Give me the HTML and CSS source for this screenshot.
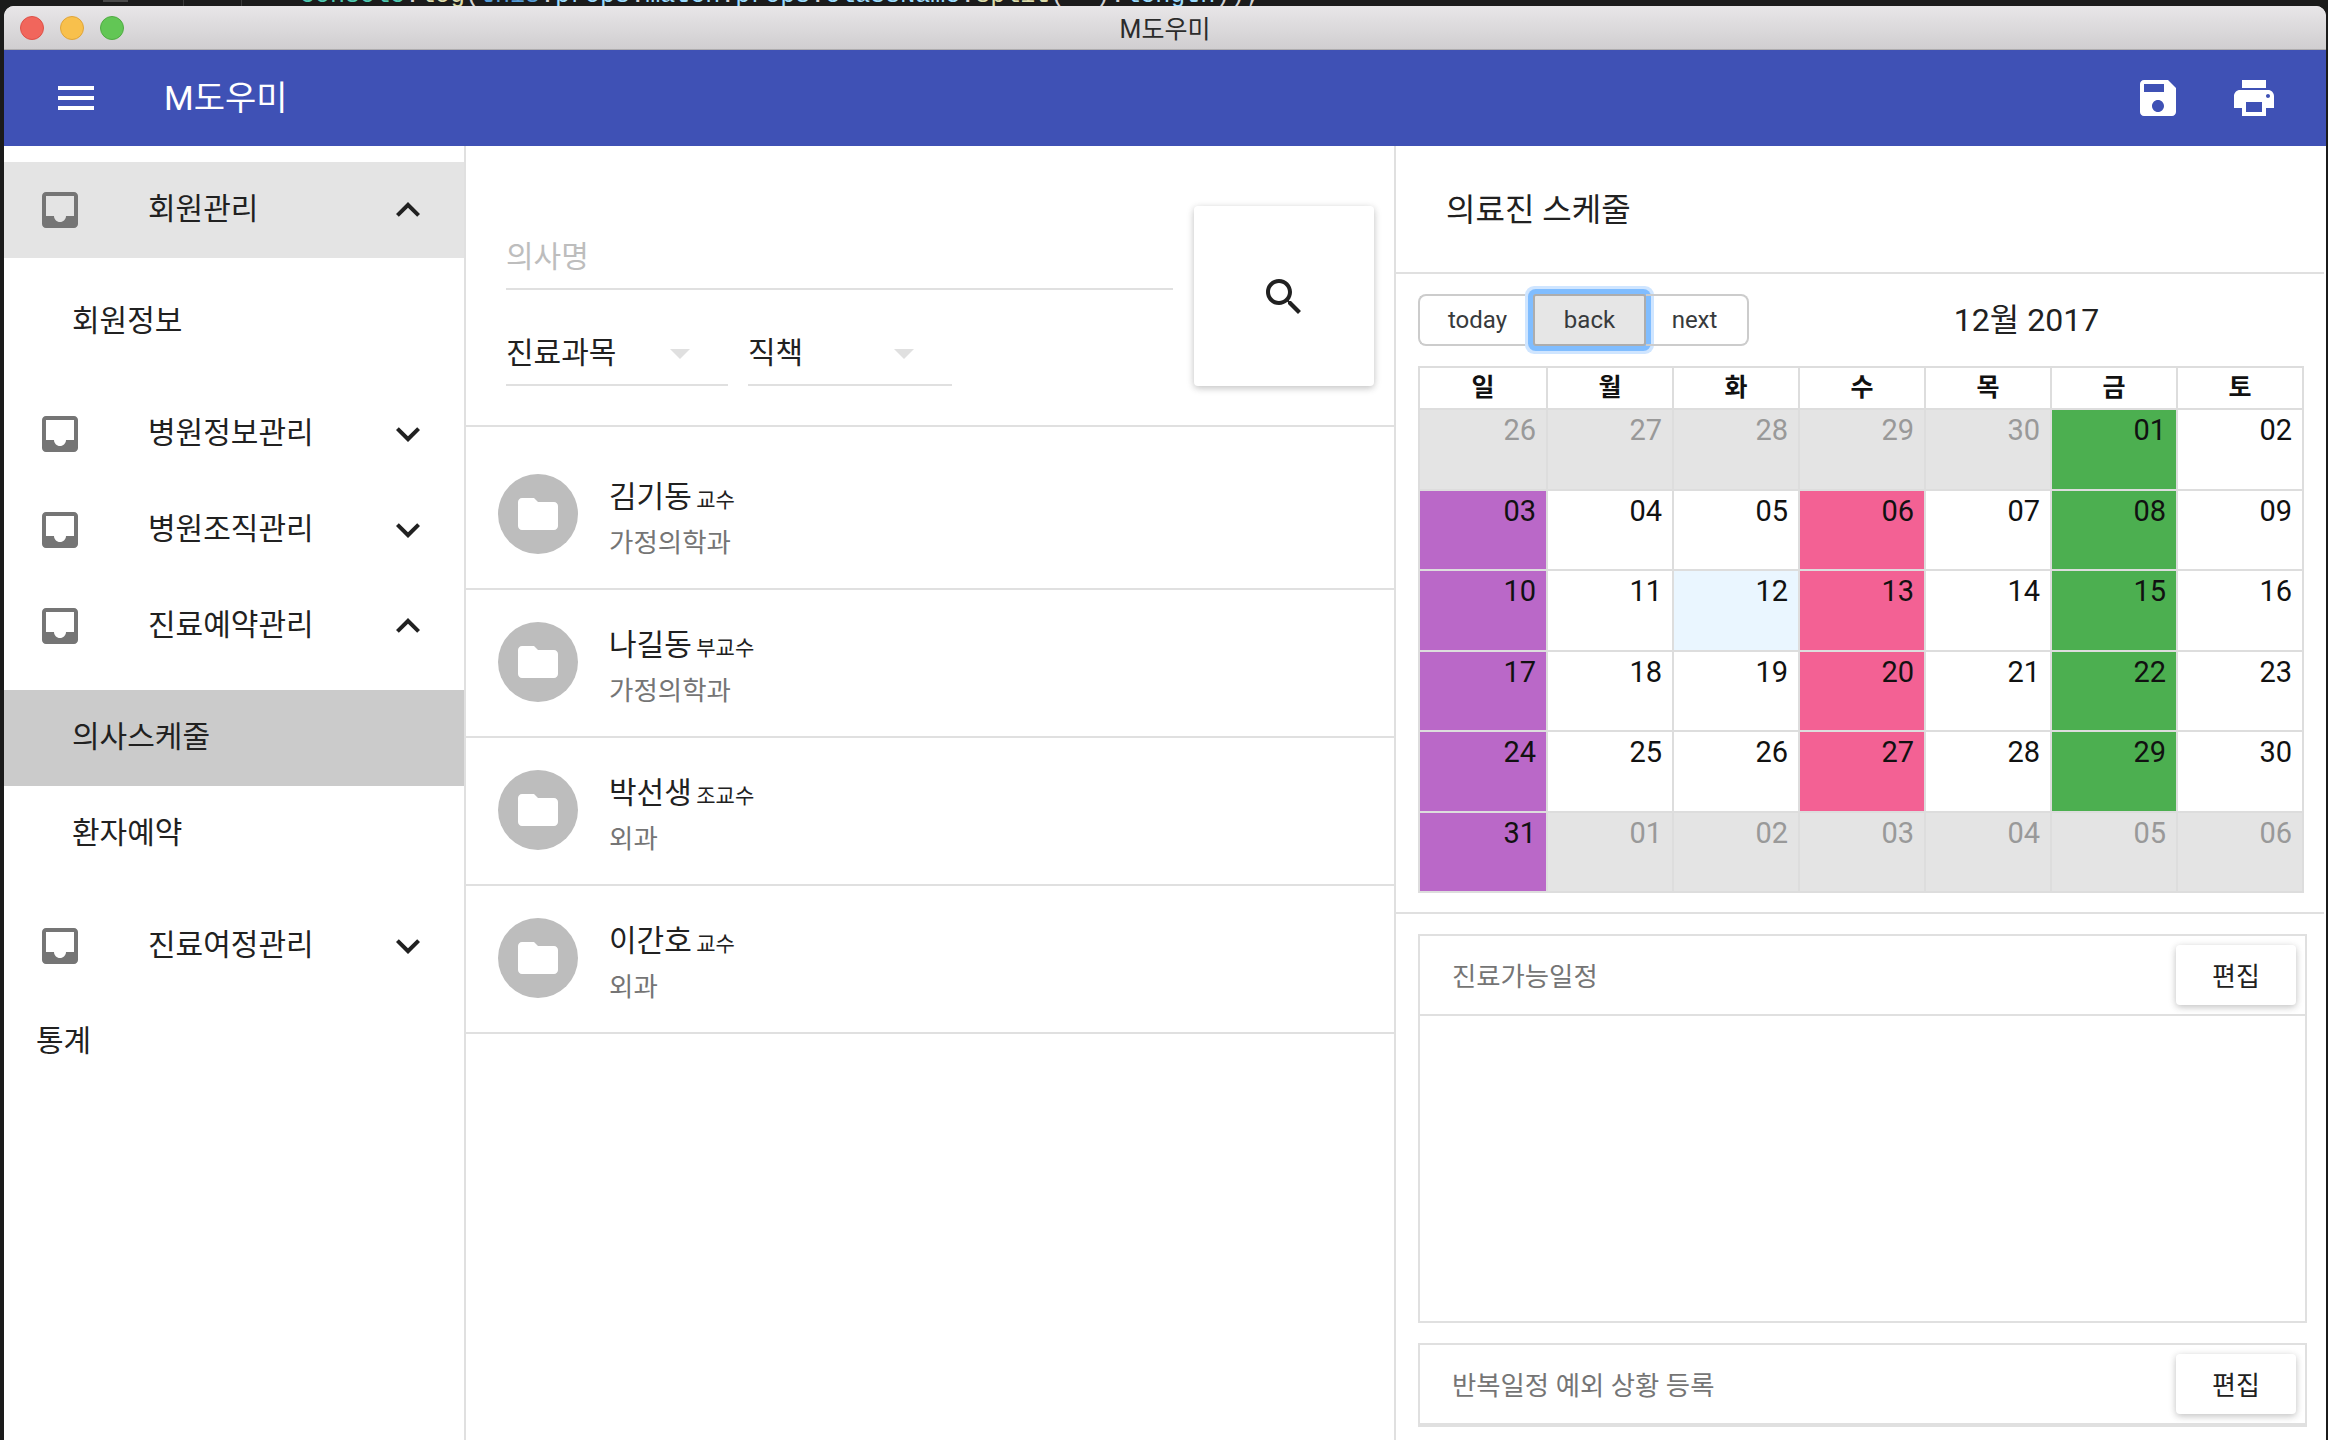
FILE: index.html
```html
<!DOCTYPE html>
<html lang="ko">
<head>
    <meta charset="UTF-8">
    <meta name="viewport" content="width=device-width, initial-scale=1.0">
    <title>M도우미</title>
    <link rel="stylesheet" href="styles.css">
</head>
<body>
    <!-- editor behind the window, only its last line shows -->
    <div class="backdrop">
        <span class="code"><span class="c-teal">console</span><span class="c-white">.</span><span class="c-yellow">log</span><span class="c-white">(</span><span class="c-blue">this</span><span class="c-white">.</span><span class="c-sky">props</span><span class="c-white">.</span><span class="c-sky">match</span><span class="c-white">.</span><span class="c-sky">props</span><span class="c-white">.</span><span class="c-sky">className</span><span class="c-white">.</span><span class="c-yellow">split</span><span class="c-white">('').</span><span class="c-sky">length</span><span class="c-white">));</span></span>
    </div>

    <div class="window">
        <div class="titlebar">
            <div class="lights">
                <span class="light light-red"></span>
                <span class="light light-yellow"></span>
                <span class="light light-green"></span>
            </div>
            <div class="titlebar-text">M도우미</div>
        </div>

        <header class="appbar">
            <svg class="icon appbar-menu" viewBox="0 0 24 24"><path d="M3 18h18v-2H3v2zm0-5h18v-2H3v2zm0-7v2h18V6H3z"/></svg>
            <div class="appbar-title">M도우미</div>
            <svg class="icon appbar-save" viewBox="0 0 24 24"><path d="M17 3H5c-1.11 0-2 .9-2 2v14c0 1.1.89 2 2 2h14c1.1 0 2-.9 2-2V7l-4-4zm-5 16c-1.66 0-3-1.34-3-3s1.34-3 3-3 3 1.34 3 3-1.34 3-3 3zm3-10H5V5h10v4z"/></svg>
            <svg class="icon appbar-print" viewBox="0 0 24 24"><path d="M19 8H5c-1.66 0-3 1.34-3 3v6h4v4h12v-4h4v-6c0-1.66-1.34-3-3-3zm-3 11H8v-5h8v5zm3-7c-.55 0-1-.45-1-1s.45-1 1-1 1 .45 1 1-.45 1-1 1zm-1-9H6v4h12V3z"/></svg>
        </header>

        <div class="columns">
            <nav class="sidebar">
                <div class="nav-item nav-open">
                    <svg class="icon nav-icon" viewBox="0 0 24 24"><path d="M19 3H4.99c-1.11 0-1.98.89-1.98 2L3 19c0 1.1.88 2 1.99 2H19c1.1 0 2-.9 2-2V5c0-1.11-.9-2-2-2zm0 12h-4c0 1.66-1.35 3-3 3s-3-1.34-3-3H4.99V5H19v10z"/></svg>
                    <span class="nav-label">회원관리</span>
                    <svg class="icon nav-arrow" viewBox="0 0 24 24"><path d="M12 8l-6 6 1.41 1.41L12 10.83l4.59 4.58L18 14z"/></svg>
                </div>
                <div class="nav-children">
                    <div class="nav-child">회원정보</div>
                </div>
                <div class="nav-item">
                    <svg class="icon nav-icon" viewBox="0 0 24 24"><path d="M19 3H4.99c-1.11 0-1.98.89-1.98 2L3 19c0 1.1.88 2 1.99 2H19c1.1 0 2-.9 2-2V5c0-1.11-.9-2-2-2zm0 12h-4c0 1.66-1.35 3-3 3s-3-1.34-3-3H4.99V5H19v10z"/></svg>
                    <span class="nav-label">병원정보관리</span>
                    <svg class="icon nav-arrow" viewBox="0 0 24 24"><path d="M16.59 8.59L12 13.17 7.41 8.59 6 10l6 6 6-6z"/></svg>
                </div>
                <div class="nav-item">
                    <svg class="icon nav-icon" viewBox="0 0 24 24"><path d="M19 3H4.99c-1.11 0-1.98.89-1.98 2L3 19c0 1.1.88 2 1.99 2H19c1.1 0 2-.9 2-2V5c0-1.11-.9-2-2-2zm0 12h-4c0 1.66-1.35 3-3 3s-3-1.34-3-3H4.99V5H19v10z"/></svg>
                    <span class="nav-label">병원조직관리</span>
                    <svg class="icon nav-arrow" viewBox="0 0 24 24"><path d="M16.59 8.59L12 13.17 7.41 8.59 6 10l6 6 6-6z"/></svg>
                </div>
                <div class="nav-item">
                    <svg class="icon nav-icon" viewBox="0 0 24 24"><path d="M19 3H4.99c-1.11 0-1.98.89-1.98 2L3 19c0 1.1.88 2 1.99 2H19c1.1 0 2-.9 2-2V5c0-1.11-.9-2-2-2zm0 12h-4c0 1.66-1.35 3-3 3s-3-1.34-3-3H4.99V5H19v10z"/></svg>
                    <span class="nav-label">진료예약관리</span>
                    <svg class="icon nav-arrow" viewBox="0 0 24 24"><path d="M12 8l-6 6 1.41 1.41L12 10.83l4.59 4.58L18 14z"/></svg>
                </div>
                <div class="nav-children">
                    <div class="nav-child nav-selected">의사스케줄</div>
                    <div class="nav-child">환자예약</div>
                </div>
                <div class="nav-item">
                    <svg class="icon nav-icon" viewBox="0 0 24 24"><path d="M19 3H4.99c-1.11 0-1.98.89-1.98 2L3 19c0 1.1.88 2 1.99 2H19c1.1 0 2-.9 2-2V5c0-1.11-.9-2-2-2zm0 12h-4c0 1.66-1.35 3-3 3s-3-1.34-3-3H4.99V5H19v10z"/></svg>
                    <span class="nav-label">진료여정관리</span>
                    <svg class="icon nav-arrow" viewBox="0 0 24 24"><path d="M16.59 8.59L12 13.17 7.41 8.59 6 10l6 6 6-6z"/></svg>
                </div>
                <div class="nav-plain">통계</div>
            </nav>

            <section class="doctors">
                <div class="filters">
                    <div class="filter-fields">
                        <input class="name-input" type="text" placeholder="의사명">
                        <div class="filter-selects">
                            <div class="select select-dept"><span>진료과목</span><i class="caret"></i></div>
                            <div class="select select-role"><span>직책</span><i class="caret"></i></div>
                        </div>
                    </div>
                    <div class="search-btn">
                        <svg class="icon" viewBox="0 0 24 24"><path d="M15.5 14h-.79l-.28-.27C15.41 12.59 16 11.11 16 9.5 16 5.91 13.09 3 9.5 3S3 5.91 3 9.5 5.91 16 9.5 16c1.61 0 3.09-.59 4.23-1.57l.27.28v.79l5 4.99L20.49 19l-4.99-5zm-6 0C7.01 14 5 11.99 5 9.5S7.01 5 9.5 5 14 7.01 14 9.5 11.99 14 9.5 14z"/></svg>
                    </div>
                </div>
                <div class="doctor-list">
                    <div class="doctor">
                        <div class="avatar"><svg class="icon" viewBox="0 0 24 24"><path d="M10 4H4c-1.1 0-1.99.9-1.99 2L2 18c0 1.1.9 2 2 2h16c1.1 0 2-.9 2-2V8c0-1.1-.9-2-2-2h-8l-2-2z"/></svg></div>
                        <div class="doctor-text">
                            <div class="doctor-name">김기동 <small>교수</small></div>
                            <div class="doctor-dept">가정의학과</div>
                        </div>
                    </div>
                    <div class="doctor">
                        <div class="avatar"><svg class="icon" viewBox="0 0 24 24"><path d="M10 4H4c-1.1 0-1.99.9-1.99 2L2 18c0 1.1.9 2 2 2h16c1.1 0 2-.9 2-2V8c0-1.1-.9-2-2-2h-8l-2-2z"/></svg></div>
                        <div class="doctor-text">
                            <div class="doctor-name">나길동 <small>부교수</small></div>
                            <div class="doctor-dept">가정의학과</div>
                        </div>
                    </div>
                    <div class="doctor">
                        <div class="avatar"><svg class="icon" viewBox="0 0 24 24"><path d="M10 4H4c-1.1 0-1.99.9-1.99 2L2 18c0 1.1.9 2 2 2h16c1.1 0 2-.9 2-2V8c0-1.1-.9-2-2-2h-8l-2-2z"/></svg></div>
                        <div class="doctor-text">
                            <div class="doctor-name">박선생 <small>조교수</small></div>
                            <div class="doctor-dept">외과</div>
                        </div>
                    </div>
                    <div class="doctor">
                        <div class="avatar"><svg class="icon" viewBox="0 0 24 24"><path d="M10 4H4c-1.1 0-1.99.9-1.99 2L2 18c0 1.1.9 2 2 2h16c1.1 0 2-.9 2-2V8c0-1.1-.9-2-2-2h-8l-2-2z"/></svg></div>
                        <div class="doctor-text">
                            <div class="doctor-name">이간호 <small>교수</small></div>
                            <div class="doctor-dept">외과</div>
                        </div>
                    </div>
                </div>
            </section>

            <section class="schedule">
                <h2 class="schedule-title">의료진 스케줄</h2>
                <div class="calendar-wrap">
                    <div class="toolbar">
                        <div class="btn-group">
                            <span class="tool-btn">today</span>
                            <span class="tool-btn tool-active">back</span>
                            <span class="tool-btn">next</span>
                        </div>
                        <div class="toolbar-label">12월 2017</div>
                    </div>
                    <div class="calendar">
                        <div class="cal-row cal-head">
                            <div class="cal-cell">일</div><div class="cal-cell">월</div><div class="cal-cell">화</div><div class="cal-cell">수</div><div class="cal-cell">목</div><div class="cal-cell">금</div><div class="cal-cell">토</div>
                        </div>
                        <div class="cal-row">
                            <div class="cal-cell off">26</div><div class="cal-cell off">27</div><div class="cal-cell off">28</div><div class="cal-cell off">29</div><div class="cal-cell off">30</div><div class="cal-cell green">01</div><div class="cal-cell">02</div>
                        </div>
                        <div class="cal-row">
                            <div class="cal-cell purple">03</div><div class="cal-cell">04</div><div class="cal-cell">05</div><div class="cal-cell pink">06</div><div class="cal-cell">07</div><div class="cal-cell green">08</div><div class="cal-cell">09</div>
                        </div>
                        <div class="cal-row">
                            <div class="cal-cell purple">10</div><div class="cal-cell">11</div><div class="cal-cell today">12</div><div class="cal-cell pink">13</div><div class="cal-cell">14</div><div class="cal-cell green">15</div><div class="cal-cell">16</div>
                        </div>
                        <div class="cal-row">
                            <div class="cal-cell purple">17</div><div class="cal-cell">18</div><div class="cal-cell">19</div><div class="cal-cell pink">20</div><div class="cal-cell">21</div><div class="cal-cell green">22</div><div class="cal-cell">23</div>
                        </div>
                        <div class="cal-row">
                            <div class="cal-cell purple">24</div><div class="cal-cell">25</div><div class="cal-cell">26</div><div class="cal-cell pink">27</div><div class="cal-cell">28</div><div class="cal-cell green">29</div><div class="cal-cell">30</div>
                        </div>
                        <div class="cal-row">
                            <div class="cal-cell purple">31</div><div class="cal-cell off">01</div><div class="cal-cell off">02</div><div class="cal-cell off">03</div><div class="cal-cell off">04</div><div class="cal-cell off">05</div><div class="cal-cell off">06</div>
                        </div>
                    </div>
                </div>
                <div class="panel panel-hours">
                    <div class="panel-head">
                        <span class="panel-title">진료가능일정</span>
                        <span class="edit-btn">편집</span>
                    </div>
                </div>
                <div class="panel">
                    <div class="panel-head">
                        <span class="panel-title">반복일정 예외 상황 등록</span>
                        <span class="edit-btn">편집</span>
                    </div>
                </div>
            </section>
        </div>
    </div>
</body>
</html>
```

FILE: styles.css
```css
html, body {
    margin: 0;
    padding: 0;
    height: 1440px;
    overflow: hidden;
}
body {
    font-family: Roboto, "Noto Sans CJK KR", sans-serif;
    background-color: #1b1b1b;
    color: #212121;
}
.icon {
    display: block;
    width: 48px;
    height: 48px;
    fill: currentColor;
    flex: none;
}

/* editor strip above the window */
.backdrop {
    height: 6px;
    overflow: hidden;
    padding-left: 300px;
    background-image:
        linear-gradient(#3a3a3a, #3a3a3a),
        linear-gradient(#3a3a3a, #3a3a3a),
        linear-gradient(#4a4a4a, #4a4a4a);
    background-size: 1px 6px, 1px 6px, 25px 2px;
    background-position: 183px 0, 241px 0, 103px 0;
    background-repeat: no-repeat;
}
.code {
    display: block;
    margin-top: -20px;
    font-family: "Liberation Mono", monospace;
    font-size: 25px;
    line-height: 32px;
    white-space: nowrap;
}
.c-teal { color: #4ec9b0; }
.c-yellow { color: #dcdcaa; }
.c-blue { color: #569cd6; }
.c-sky { color: #9cdcfe; }
.c-white { color: #d4d4d4; }

.window {
    margin: 0 2px 0 4px;
    height: 1434px;
    background-color: #ffffff;
    border-radius: 10px 10px 0 0;
    overflow: hidden;
    display: flex;
    flex-direction: column;
}

/* mac title bar */
.titlebar {
    height: 44px;
    box-sizing: border-box;
    flex: none;
    display: flex;
    align-items: center;
    justify-content: center;
    position: relative;
    background: linear-gradient(#e8e6e8, #d0ced0);
    border-bottom: 1px solid #aeacae;
}
.lights {
    position: absolute;
    left: 16px;
    top: 10px;
    display: flex;
    gap: 16px;
}
.light {
    width: 24px;
    height: 24px;
    box-sizing: border-box;
    border-radius: 50%;
    border: 1px solid;
}
.light-red { background-color: #f1665c; border-color: #dd5148; }
.light-yellow { background-color: #f8c04c; border-color: #dfa43a; }
.light-green { background-color: #62c655; border-color: #50ab43; }
.titlebar-text {
    padding-bottom: 2px;
    font-size: 25px;
    color: #2b2b2b;
}

/* blue app bar */
.appbar {
    height: 96px;
    flex: none;
    display: flex;
    align-items: center;
    background-color: #3f51b5;
    color: #ffffff;
}
.appbar-menu {
    margin-left: 48px;
}
.appbar-title {
    margin-left: 64px;
    padding-bottom: 5px;
    font-size: 34px;
    flex: 1;
}
.appbar-print {
    margin: 0 48px 0 48px;
}

.columns {
    flex: 1;
    display: flex;
    min-height: 0;
}

/* left menu */
.sidebar {
    width: 462px;
    box-sizing: border-box;
    flex: none;
    padding-top: 16px;
    border-right: 2px solid #e0e0e0;
    font-size: 30px;
}
.nav-item {
    height: 96px;
    display: flex;
    align-items: center;
    padding-left: 32px;
}
.nav-open {
    background-color: #e4e4e4;
}
.nav-icon {
    color: #757575;
}
.nav-label {
    margin-left: 64px;
    padding-bottom: 8px;
    flex: 1;
}
.nav-arrow {
    margin-right: 32px;
}
.nav-children {
    padding: 16px 0;
}
.nav-child {
    height: 96px;
    box-sizing: border-box;
    display: flex;
    align-items: center;
    padding: 0 0 8px 68px;
}
.nav-selected {
    background-color: #cbcbcb;
}
.nav-plain {
    height: 96px;
    box-sizing: border-box;
    display: flex;
    align-items: center;
    padding: 0 0 8px 32px;
}

/* doctor search and list */
.doctors {
    width: 930px;
    box-sizing: border-box;
    flex: none;
    border-right: 2px solid #e0e0e0;
}
.filters {
    display: flex;
    height: 281px;
    box-sizing: border-box;
    padding: 60px 20px 0 40px;
    border-bottom: 2px solid #e0e0e0;
}
.filter-fields {
    width: 667px;
    margin-right: 21px;
}
.name-input {
    display: block;
    width: 100%;
    height: 84px;
    box-sizing: border-box;
    padding: 18px 0 0 0;
    border: none;
    border-bottom: 2px solid #e0e0e0;
    outline: none;
    font-family: inherit;
    font-size: 30px;
    color: #212121;
}
.name-input::placeholder {
    color: #bdbdbd;
    opacity: 1;
}
.filter-selects {
    display: flex;
    gap: 20px;
}
.select {
    height: 96px;
    box-sizing: border-box;
    padding: 38px 38px 0 0;
    border-bottom: 2px solid #e0e0e0;
    display: flex;
    justify-content: space-between;
    font-size: 30px;
}
.select-dept { width: 222px; }
.select-role { width: 204px; }
.caret {
    width: 0;
    height: 0;
    margin-top: 21px;
    border-left: 10px solid transparent;
    border-right: 10px solid transparent;
    border-top: 10px solid #e0e0e0;
}
.search-btn {
    width: 180px;
    height: 180px;
    box-sizing: border-box;
    padding-top: 2px;
    flex: none;
    display: flex;
    align-items: center;
    justify-content: center;
    border-radius: 4px;
    box-shadow: 0 2px 8px rgba(0, 0, 0, 0.14), 0 2px 6px rgba(0, 0, 0, 0.12);
}
.doctor-list {
    padding-top: 15px;
}
.doctor {
    height: 148px;
    box-sizing: border-box;
    padding: 32px 0 0 32px;
    display: flex;
    gap: 31px;
    border-bottom: 2px solid #e0e0e0;
}
.avatar {
    width: 80px;
    height: 80px;
    border-radius: 50%;
    background-color: #bdbdbd;
    color: #ffffff;
    display: flex;
    align-items: center;
    justify-content: center;
}
.doctor-text {
    margin-top: 2px;
}
.doctor-name {
    font-size: 30px;
    line-height: 42px;
}
.doctor-name small {
    margin-left: -3px;
    font-size: 21px;
}
.doctor-dept {
    font-size: 26.5px;
    line-height: 43px;
    color: #757575;
}

/* schedule column */
.schedule {
    width: 928px;
    flex: none;
}
.schedule-title {
    margin: 0;
    height: 128px;
    box-sizing: border-box;
    padding: 0 0 4px 50px;
    display: flex;
    align-items: center;
    border-bottom: 2px solid #e0e0e0;
    font-size: 32px;
    font-weight: 400;
}
.calendar-wrap {
    padding: 20px 20px 19px 22px;
    border-bottom: 2px solid #e0e0e0;
}
.toolbar {
    display: flex;
    align-items: center;
    margin-bottom: 20px;
}
.btn-group {
    display: flex;
    height: 52px;
}
.tool-btn {
    display: flex;
    align-items: center;
    justify-content: center;
    box-sizing: border-box;
    border: 2px solid #cccccc;
    font-size: 24px;
    color: #373a3c;
}
.tool-btn:first-child {
    width: 115px;
    padding-left: 2px;
    border-radius: 8px 0 0 8px;
    border-right: none;
}
.tool-btn:last-child {
    width: 103px;
    padding-right: 4px;
    border-radius: 0 8px 8px 0;
    border-left: none;
}
.tool-active {
    width: 113px;
    background-color: #e6e6e6;
    border-color: #adadad;
    border-radius: 3px;
    box-shadow: 0 0 0 5px #80bdff, 0 0 0 8px #cfe5ff;
}
.toolbar-label {
    flex: 1;
    padding-bottom: 6px;
    text-align: center;
    font-size: 32px;
}
.calendar {
    width: 886px;
    height: 527px;
    box-sizing: border-box;
    border: 2px solid #dddddd;
    display: flex;
    flex-direction: column;
}
.cal-row {
    flex: 1;
    display: grid;
    grid-template-columns: repeat(7, 1fr);
    border-top: 2px solid #dddddd;
}
.cal-row:first-child {
    border-top: none;
}
.cal-head {
    flex: none;
    height: 40px;
}
.cal-cell {
    padding: 0 10px 0 0;
    text-align: right;
    font-size: 29px;
    line-height: 40px;
    border-left: 2px solid #dddddd;
    color: #111111;
}
.cal-cell:first-child {
    border-left: none;
}
.cal-head .cal-cell {
    padding: 0;
    text-align: center;
    font-size: 25px;
    font-weight: 700;
    line-height: 40px;
}
.off { background-color: #e4e4e4; color: #999999; }
.green { background-color: #4caf50; }
.purple { background-color: #ba68c8; }
.pink { background-color: #f36194; }
.today { background-color: #eaf6ff; }

.panel {
    width: 889px;
    box-sizing: border-box;
    margin: 20px 0 0 22px;
    border: 2px solid #e0e0e0;
}
.panel-hours {
    height: 389px;
}
.panel-head {
    height: 80px;
    box-sizing: border-box;
    display: flex;
    align-items: center;
    justify-content: space-between;
    padding: 0 9px 0 32px;
    border-bottom: 2px solid #e0e0e0;
}
.panel-title {
    padding-bottom: 2px;
    font-size: 26.4px;
    color: #757575;
}
.edit-btn {
    width: 120px;
    height: 60px;
    box-sizing: border-box;
    padding-bottom: 2px;
    display: flex;
    align-items: center;
    justify-content: center;
    border-radius: 4px;
    font-size: 26px;
    box-shadow: 0 2px 8px rgba(0, 0, 0, 0.14), 0 2px 6px rgba(0, 0, 0, 0.12);
}
```
